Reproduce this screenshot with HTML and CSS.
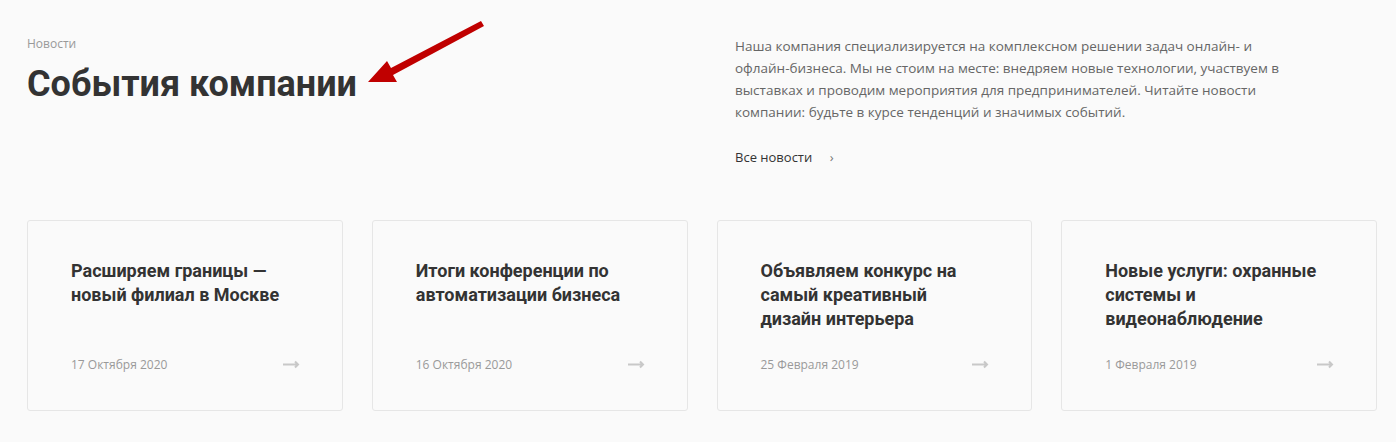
FILE: index.html
```html
<!DOCTYPE html>
<html lang="ru">
<head>
  <meta charset="UTF-8" />
  <meta name="viewport" content="width=device-width, initial-scale=1.0" />
  <title>Новости</title>
  <link rel="stylesheet" href="styles.css">
</head>
<body>
  <section class="news">
    <div class="news-head">
      <div class="head-left">
        <div class="overline">Новости</div>
        <h1>События компании</h1>
      </div>
      <div class="head-right">
        <p>Наша компания специализируется на комплексном решении задач онлайн- и офлайн-бизнеса. Мы не стоим на месте: внедряем новые технологии, участвуем в выставках и проводим мероприятия для предпринимателей. Читайте новости компании: будьте в курсе тенденций и значимых событий.</p>
        <a class="all-link" href="#">Все новости <span class="chevron">›</span></a>
      </div>
    </div>

    <div class="cards">
      <a class="card" href="#">
        <h3>Расширяем границы — новый филиал в Москве</h3>
        <div class="card-foot">
          <span class="date">17 Октября 2020</span>
          <svg class="go" width="17" height="9" viewBox="0 0 17 9"><path d="M0 4.5h15M12 1.5l3 3-3 3" fill="none" stroke="#c8c8c8" stroke-width="2"/></svg>
        </div>
      </a>
      <a class="card" href="#">
        <h3>Итоги конференции по автоматизации бизнеса</h3>
        <div class="card-foot">
          <span class="date">16 Октября 2020</span>
          <svg class="go" width="17" height="9" viewBox="0 0 17 9"><path d="M0 4.5h15M12 1.5l3 3-3 3" fill="none" stroke="#c8c8c8" stroke-width="2"/></svg>
        </div>
      </a>
      <a class="card" href="#">
        <h3>Объявляем конкурс на самый креативный дизайн интерьера</h3>
        <div class="card-foot">
          <span class="date">25 Февраля 2019</span>
          <svg class="go" width="17" height="9" viewBox="0 0 17 9"><path d="M0 4.5h15M12 1.5l3 3-3 3" fill="none" stroke="#c8c8c8" stroke-width="2"/></svg>
        </div>
      </a>
      <a class="card" href="#">
        <h3>Новые услуги: охранные системы и видеонаблюдение</h3>
        <div class="card-foot">
          <span class="date">1 Февраля 2019</span>
          <svg class="go" width="17" height="9" viewBox="0 0 17 9"><path d="M0 4.5h15M12 1.5l3 3-3 3" fill="none" stroke="#c8c8c8" stroke-width="2"/></svg>
        </div>
      </a>
    </div>

    <!-- pointer drawn over the heading -->
    <svg class="pointer" width="130" height="75" viewBox="0 0 130 75">
      <path d="M121 9 L31 56 L27 49 L8 70 L37 70 L33 63 L124 14 Z" fill="#c00000"/>
    </svg>
  </section>
</body>
</html>
```

FILE: styles.css
```css
html, body {
  margin: 0;
  background: #fafafa;
  color: #333;
  font-family: "Open Sans", sans-serif;
}
.news {
  position: relative;
  padding: 35px 19px 0 27px;
}
.news-head {
  display: grid;
  grid-template-columns: 708px 1fr;
}
.overline {
  padding-top: 1px;
  font-size: 12px;
  color: #999;
  line-height: 16px;
}
h1 {
  font-family: Roboto, sans-serif;
  font-weight: 700;
  font-size: 36px;
  line-height: 40px;
  margin: 12px 0 0;
  color: #333;
}
.head-right p {
  margin: 0;
  width: 568px;
  font-size: 13.5px;
  line-height: 22px;
  color: #666;
}
.all-link {
  display: inline-block;
  margin-top: 25px;
  font-size: 13px;
  color: #333;
  text-decoration: none;
}
.chevron {
  margin-left: 14px;
  color: #777;
}
.cards {
  display: grid;
  grid-template-columns: repeat(4, 1fr);
  gap: 29px;
  margin-top: 53px;
}
.card {
  display: flex;
  flex-direction: column;
  justify-content: space-between;
  height: 191px;
  box-sizing: border-box;
  padding: 38px 42px 37px 43px;
  border: 1px solid #e6e6e6;
  border-radius: 3px;
  text-decoration: none;
  color: #333;
}
.card h3 {
  margin: 0;
  font-family: Roboto, sans-serif;
  font-weight: 700;
  font-size: 18px;
  line-height: 24px;
}
.card-foot {
  display: flex;
  justify-content: space-between;
  align-items: center;
}
.date {
  font-size: 12px;
  color: #999;
}
.pointer {
  position: absolute;
  left: 360px;
  top: 12px;
}
```
